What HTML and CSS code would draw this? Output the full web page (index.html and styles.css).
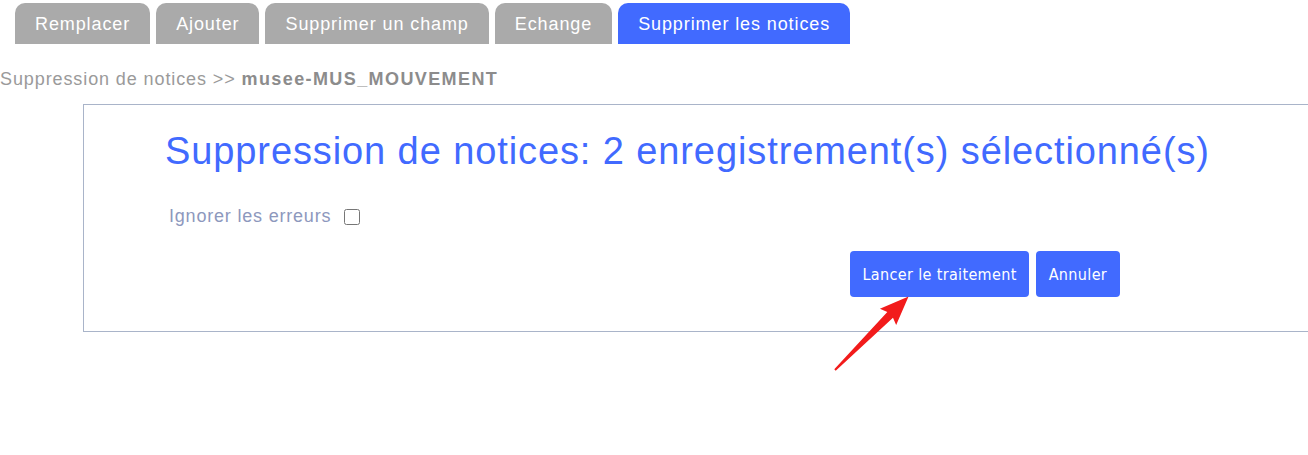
FILE: index.html
```html
<!DOCTYPE html>
<html lang="fr">
<head>
<meta charset="utf-8">
<title>Suppression de notices</title>
<link rel="stylesheet" href="styles.css">
</head>
<body>
<nav class="tabs">
  <a class="tab">Remplacer</a>
  <a class="tab">Ajouter</a>
  <a class="tab">Supprimer un champ</a>
  <a class="tab">Echange</a>
  <a class="tab active">Supprimer les notices</a>
</nav>
<div class="crumb">Suppression de notices &gt;&gt; <b>musee-MUS_MOUVEMENT</b></div>
<section class="panel">
  <h1 class="title">Suppression de notices: 2 enregistrement(s) sélectionné(s)</h1>
  <label class="opt">Ignorer les erreurs <input type="checkbox" class="chk"></label>
  <div class="actions">
    <button class="btn">Lancer le traitement</button>
    <button class="btn">Annuler</button>
  </div>
</section>
<svg class="arrow" width="1308" height="455" viewBox="0 0 1308 455">
  <g transform="translate(835,370) rotate(-45)">
    <polygon points="0,-1 78,-4 75,-11.5 104,0 75,11.5 78,4 0,1" fill="#f21b1b"/>
  </g>
</svg>
</body>
</html>
```
FILE: styles.css
```css
html, body {
  margin: 0;
  padding: 0;
  background: #fff;
  font-family: "Liberation Sans", Arial, sans-serif;
}
body {
  position: relative;
  width: 1308px;
  height: 455px;
  overflow: hidden;
}
.tabs {
  display: flex;
  gap: 6px;
  padding: 3px 0 0 15px;
}
.tab {
  display: block;
  height: 41px;
  line-height: 43px;
  padding: 0 20px;
  background: #aaaaaa;
  color: #fff;
  font-size: 18px;
  letter-spacing: 0.9px;
  border-radius: 10px 10px 0 0;
}
.tab.active {
  background: #416aff;
}
.crumb {
  margin-top: 25px;
  font-size: 18px;
  line-height: 20px;
  letter-spacing: 0.9px;
  color: #9a9a9a;
}
.crumb b {
  color: #8c8c8c;
  letter-spacing: 1.4px;
}
.panel {
  margin: 15px 0 0 83px;
  width: 1225px;
  height: 228px;
  border: 1px solid #a9b4c9;
  border-right: none;
  box-sizing: border-box;
  padding: 0 0 0 81px;
}
.title {
  margin: 23px 0 0 0;
  font-weight: normal;
  font-size: 38px;
  line-height: 46px;
  letter-spacing: 0.9px;
  color: #416aff;
}
.opt {
  display: flex;
  align-items: center;
  gap: 13px;
  margin: 32px 0 0 4px;
  font-size: 18px;
  letter-spacing: 0.8px;
  color: #8d98bd;
}
.chk {
  margin: 0;
  width: 16px;
  height: 16px;
}
.actions {
  display: flex;
  gap: 7px;
  margin: 24px 0 0 685px;
}
.btn {
  height: 46px;
  padding: 0 12.5px;
  border: none;
  border-radius: 4px;
  background: #416aff;
  color: #fff;
  font-family: "DejaVu Sans Condensed", "DejaVu Sans", sans-serif;
  font-size: 16px;
  letter-spacing: 0.35px;
}
.arrow {
  position: absolute;
  left: 0;
  top: 0;
  pointer-events: none;
}
```
